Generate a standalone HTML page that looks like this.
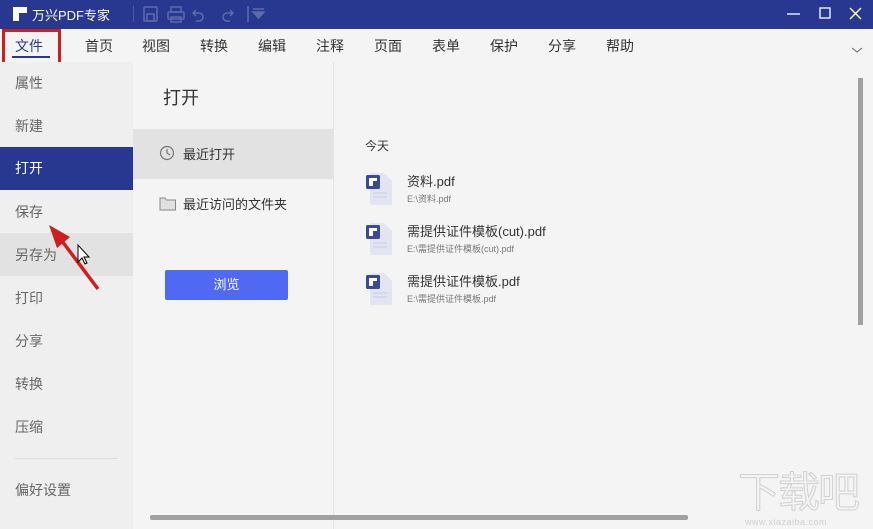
<html><head><style>
body{margin:0;width:873px;height:529px;overflow:hidden;background:#f4f4f4;font-family:"Liberation Sans","Noto Sans CJK SC",sans-serif;position:relative}
.a{position:absolute}
.t{font-size:14px;color:#333}
.s{font-size:14px;color:#666;left:15px}
</style></head><body>
<div class="a" style="left:0;top:0;width:873px;height:29px;background:#283891"></div>
<div class="a" style="left:13px;top:7px;width:14px;height:6px;background:#fff"></div>
<div class="a" style="left:13px;top:13px;width:6px;height:8px;background:#fff"></div>
<div class="a" style="left:32px;top:5px;font-size:13px;color:#fff">万兴PDF专家</div>
<div class="a" style="left:133px;top:6px;width:1px;height:16px;background:#4a58a5"></div>
<svg class="a" style="left:140px;top:4px" width="140" height="22" fill="none" stroke="#5e6aae" stroke-width="1.5">
<rect x="4" y="3" width="13" height="14" rx="1"/><rect x="7" y="10" width="7" height="7"/>
<rect x="28" y="8" width="16" height="7" rx="1"/><rect x="31" y="3" width="10" height="5"/><rect x="31" y="13" width="10" height="5"/>
<path d="M56 6 l-3 3 l3 3 M53 9 h6 a4 4 0 0 1 0 8 h-3"/>
<path d="M90 6 l3 3 l-3 3 M93 9 h-6 a4 4 0 0 0 0 8 h3"/>
<path d="M108 2 v16"/><path d="M113 8 h11 l-5.5 6z" fill="#5e6aae"/><path d="M113 5 h11"/>
</svg>
<svg class="a" style="left:780px;top:0" width="93" height="29" stroke="#fff" stroke-width="1.3" fill="none">
<path d="M7 14 h13"/><rect x="40" y="8" width="10" height="10"/><path d="M70 8 l11 11 M81 8 l-11 11"/>
</svg>
<div class="a t" style="left:15px;top:36px;font-size:14px;color:#283891">文件</div>
<div class="a" style="left:12px;top:56px;width:38px;height:2px;background:#283891"></div>
<div class="a" style="left:2px;top:29px;width:59px;height:42px;border:3px solid #d21d1d;box-sizing:border-box"></div>
<div class="a t" style="left:85px;top:36px">首页</div><div class="a t" style="left:142px;top:36px">视图</div><div class="a t" style="left:200px;top:36px">转换</div><div class="a t" style="left:258px;top:36px">编辑</div><div class="a t" style="left:316px;top:36px">注释</div><div class="a t" style="left:374px;top:36px">页面</div><div class="a t" style="left:432px;top:36px">表单</div><div class="a t" style="left:490px;top:36px">保护</div><div class="a t" style="left:548px;top:36px">分享</div><div class="a t" style="left:606px;top:36px">帮助</div>
<svg class="a" style="left:850px;top:45px" width="14" height="10"><path d="M2 3 l5 4 l5-4" stroke="#666" fill="none"/></svg>
<div class="a" style="left:0;top:62px;width:133px;height:467px;background:#efefef"></div>
<div class="a" style="left:0;top:147px;width:133px;height:43px;background:#283891"></div>
<div class="a" style="left:0;top:233px;width:133px;height:43px;background:#e2e2e2"></div>
<div class="a s" style="top:73px">属性</div><div class="a s" style="top:116px">新建</div>
<div class="a s" style="top:158px;color:#fff">打开</div>
<div class="a s" style="top:202px">保存</div><div class="a s" style="top:245px">另存为</div><div class="a s" style="top:288px">打印</div><div class="a s" style="top:331px">分享</div><div class="a s" style="top:374px">转换</div><div class="a s" style="top:417px">压缩</div>
<div class="a" style="left:15px;top:458px;width:103px;height:1px;background:#ddd"></div>
<div class="a s" style="top:480px">偏好设置</div>
<svg class="a" style="left:40px;top:215px" width="70" height="80"><path d="M58 74 L22 26" stroke="#cc1f1f" stroke-width="3.5"/><path d="M9 10 L30 22 L17 33z" fill="#cc1f1f"/><path d="M38 30 v17 l4-4 l3 6 l2-1 l-3-6 h5z" fill="#fff" stroke="#000" stroke-width="1"/></svg>
<div class="a" style="left:163px;top:84px;font-size:18px;color:#333">打开</div>
<div class="a" style="left:133px;top:129px;width:200px;height:50px;background:#e2e2e2"></div>
<svg class="a" style="left:159px;top:145px" width="16" height="16" fill="none" stroke="#777" stroke-width="1.2"><circle cx="8" cy="8" r="6.5"/><path d="M8 4 v4 l3 2"/></svg>
<div class="a" style="left:183px;top:144px;font-size:13px;color:#333">最近打开</div>
<svg class="a" style="left:159px;top:196px" width="18" height="15"><path d="M1 2 h5 l1.5 2 h9 v10 h-15.5z" fill="#e0e0e0" stroke="#888"/></svg>
<div class="a" style="left:183px;top:194px;font-size:13px;color:#333">最近访问的文件夹</div>
<div class="a" style="left:165px;top:270px;width:123px;height:30px;background:#4f69f3;border-radius:2px;color:#fff;font-size:13px;text-align:center;line-height:29px">浏览</div>
<div class="a" style="left:333px;top:62px;width:1px;height:467px;background:#e4e4e4"></div>
<div class="a" style="left:365px;top:137px;font-size:12px;color:#333">今天</div>
<svg width="0" height="0" style="position:absolute"><defs><g id="f"><path d="M4 0 h14 l8 8 v24 h-22z" fill="#e2e4f2"/><path d="M7 20 h14 M7 24 h14" stroke="#c9cce4"/><rect x="0" y="2" width="14" height="14" rx="1.5" fill="#3b4a94"/><rect x="3" y="5" width="8" height="3" fill="#fff"/><rect x="3" y="8" width="4" height="5" fill="#fff"/></g></defs></svg>
<svg class="a" style="left:366px;top:173px" width="30" height="34"><use href="#f"/></svg>
<svg class="a" style="left:366px;top:223px" width="30" height="34"><use href="#f"/></svg>
<svg class="a" style="left:366px;top:273px" width="30" height="34"><use href="#f"/></svg>
<div class="a" style="left:407px;top:171px;font-size:13px;color:#333">资料.pdf</div>
<div class="a" style="left:407px;top:192px;font-size:9px;color:#777">E:\资料.pdf</div>
<div class="a" style="left:407px;top:221px;font-size:13px;color:#333">需提供证件模板(cut).pdf</div>
<div class="a" style="left:407px;top:242px;font-size:9px;color:#777">E:\需提供证件模板(cut).pdf</div>
<div class="a" style="left:407px;top:271px;font-size:13px;color:#333">需提供证件模板.pdf</div>
<div class="a" style="left:407px;top:292px;font-size:9px;color:#777">E:\需提供证件模板.pdf</div>
<div class="a" style="left:858px;top:78px;width:5px;height:247px;background:#a0a0a0"></div>
<div class="a" style="left:150px;top:515px;width:538px;height:5px;background:#a0a0a0;border-radius:2px"></div>
<div class="a" style="left:738px;top:468px;font-size:42px;color:transparent;-webkit-text-stroke:1px #d0d0d0;letter-spacing:-2px;line-height:50px">下载吧</div>
<div class="a" style="left:745px;top:517px;font-size:9px;color:#d0d0d0;letter-spacing:0.5px">www.xiazaiba.com</div>
</body></html>
